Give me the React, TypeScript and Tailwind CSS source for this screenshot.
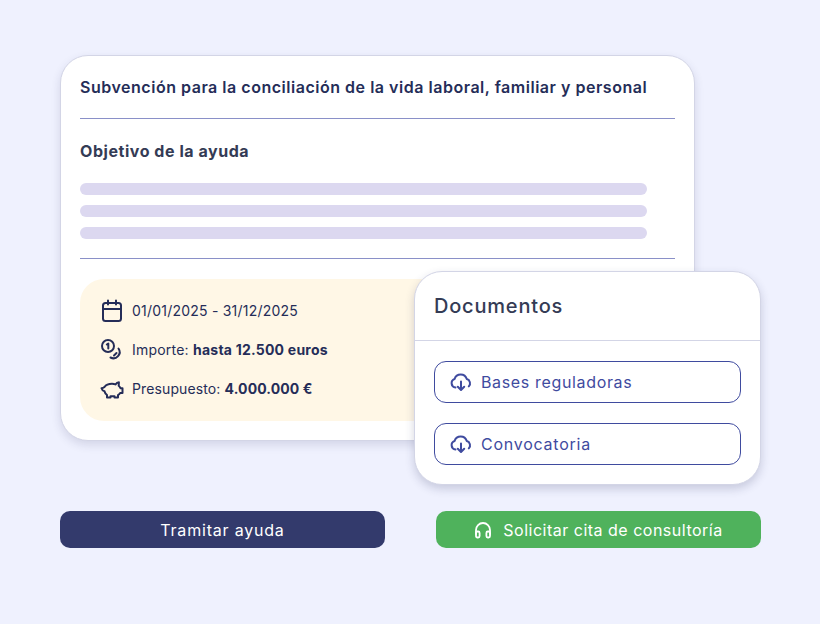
import React from "react";

const Cloud = () => (
  <svg width="22" height="22" viewBox="0 0 24 24" fill="none" stroke="#3f4b9f" strokeWidth="2.2" strokeLinecap="round" strokeLinejoin="round" className="shrink-0 ml-[1px] -mr-[1px]">
    <path d="M6 18A4.800 4.800 0 0 1 5 8.700 7 7 0 0 1 18.300 8.800 4.800 4.800 0 0 1 20.500 16.800" />
    <path d="M12 11.500v9M8.500 17.200l3.500 3.500 3.500-3.500" />
  </svg>
);

const Calendar = () => (
  <svg width="22" height="24" viewBox="0 0 22 24" fill="none" stroke="#252d58" strokeWidth="2" strokeLinecap="round" strokeLinejoin="round" className="shrink-0">
    <rect x="2" y="4" width="18" height="18" rx="2.500" />
    <path d="M2 10h18M7 1.500v4M15 1.500v4" />
  </svg>
);

const Coins = () => (
  <svg width="24" height="24" viewBox="0 0 24 24" fill="none" stroke="#252d58" strokeWidth="2" strokeLinecap="round" strokeLinejoin="round" className="shrink-0">
    <circle cx="8" cy="8" r="6" />
    <path d="M6.800 6.500 8.300 5.500V10.500" />
    <path d="M18.500 10.500a6.200 6.200 0 0 1-8 9" />
    <path d="M14 17.500l2.500-2.500" />
  </svg>
);

const Piggy = () => (
  <svg width="24" height="20" viewBox="0 0 24 20" fill="none" stroke="#252d58" strokeWidth="2" strokeLinecap="round" strokeLinejoin="round" className="shrink-0">
    <path d="M4.500 8C6 5.800 9 4.800 12 4.800c1.500 0 2.500.2 3.500.6.800-1.300 2-2.100 3.400-2.100l-.2 3.400c1 .8 1.500 1.600 1.800 2.600H22.500v4.600h-2.300c-.5 1-1.200 1.700-2.200 2.300V18.500h-3.500V17.200h-4V18.500H7V16C5.600 15 4.800 13.800 4.500 12.300 3.200 12 2 10.800 1.500 9.200 2.600 9.200 3.600 8.800 4.500 8Z" />
  </svg>
);

const Headset = () => (
  <svg width="18" height="18" viewBox="0 0 18 18" fill="none" stroke="#ffffff" strokeWidth="1.800" strokeLinecap="round" strokeLinejoin="round" className="shrink-0">
    <path d="M2 13V9a7 7 0 0 1 14 0v4" />
    <rect x="2" y="10.500" width="3.600" height="6" rx="1.400" />
    <rect x="12.400" y="10.500" width="3.600" height="6" rx="1.400" />
  </svg>
);

const Bar = () => <div className="h-3 w-[567px] rounded-md bg-[#dcd8f0]" />;

const Doc = ({ label, tracking }: { label: string; tracking: string }) => (
  <div className="flex h-[42px] items-center gap-[10px] rounded-xl border border-[#3f4b9f] pl-[14px] text-base text-[#3f4b9f]">
    <Cloud />
    <span className={tracking}>{label}</span>
  </div>
);

export default function App() {
  return (
    <div className="h-[624px] w-[820px] overflow-hidden bg-[#eff1fe] pl-[60px] pt-[55px] font-['Inter',sans-serif]">
      <div className="relative w-[701px]">
        <div className="h-[386px] w-[635px] overflow-hidden rounded-[28px] border border-[#d3d5e6] bg-white px-[19px] shadow-[0_4px_10px_rgba(40,45,90,0.14)]">
          <div className="flex h-[63px] items-center border-b border-[#8a90c8] text-base font-semibold tracking-[0.52px] text-[#252d58]">
            Subvención para la conciliación de la vida laboral, familiar y personal
          </div>
          <div className="flex h-[64px] items-center text-base font-bold tracking-[0.55px] text-[#343b55]">Objetivo de la ayuda</div>
          <div className="flex flex-col gap-[10px] border-b border-[#8a90c8] pb-[19px]">
            <Bar />
            <Bar />
            <Bar />
          </div>
          <div className="mt-5 flex h-[142px] flex-col gap-[15px] rounded-3xl bg-[#fff7e6] pl-5 pt-5 text-sm text-[#252d58]">
            <div className="flex h-6 items-center gap-[9px] pl-[1px] tracking-[0.22px]">
              <Calendar />
              <span>01/01/2025 - 31/12/2025</span>
            </div>
            <div className="flex h-6 items-center gap-2 tracking-[0.22px]">
              <Coins />
              <span>Importe: <b className="font-bold">hasta 12.500 euros</b></span>
            </div>
            <div className="flex h-6 items-center gap-2 tracking-[0.12px]">
              <Piggy />
              <span>Presupuesto: <b className="font-bold">4.000.000 €</b></span>
            </div>
          </div>
        </div>

        <div className="absolute left-[354px] top-[216px] h-[214px] w-[347px] rounded-[28px] border border-[#d3d5e6] bg-white shadow-[0_4px_10px_rgba(40,45,90,0.2)]">
          <div className="flex h-[69px] items-center border-b border-[#d3d5e6] pl-[19px] text-xl font-medium tracking-[0.8px] text-[#343b55]">
            Documentos
          </div>
          <div className="flex flex-col gap-5 px-[19px] pt-5">
            <Doc label="Bases reguladoras" tracking="tracking-[0.65px]" />
            <Doc label="Convocatoria" tracking="tracking-[0.75px]" />
          </div>
        </div>

        <div className="mt-[70px] flex justify-between text-base text-white">
          <div className="flex h-[37px] w-[325px] items-center justify-center rounded-[10px] bg-[#333a6c] tracking-[0.8px]">Tramitar ayuda</div>
          <div className="flex h-[37px] w-[325px] items-center justify-center gap-[11px] rounded-[10px] bg-[#4fb25c] tracking-[0.5px]">
            <Headset />
            <span>Solicitar cita de consultoría</span>
          </div>
        </div>
      </div>
    </div>
  );
}
